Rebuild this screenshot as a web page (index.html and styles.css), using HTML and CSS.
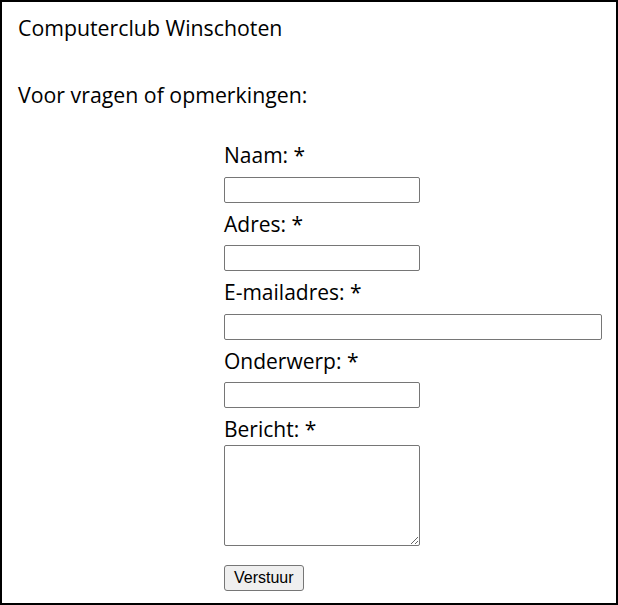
FILE: index.html
```html
<!DOCTYPE html>
<html lang="nl">
<head>
    <meta charset="UTF-8">
    <meta name="viewport" content="width=device-width, initial-scale=1.0">
    <title>Computerclub Winschoten - Contact</title>
    <link rel="stylesheet" href="styles.css">
</head>
<body>
    <div class="page">
        <p class="club">Computerclub Winschoten</p>
        <p class="intro">Voor vragen of opmerkingen:</p>
        <form class="contact">
            <label for="naam">Naam: *</label>
            <input type="text" id="naam" class="field">
            <label for="adres">Adres: *</label>
            <input type="text" id="adres" class="field">
            <label for="email">E-mailadres: *</label>
            <input type="text" id="email" class="field wide">
            <label for="onderwerp">Onderwerp: *</label>
            <input type="text" id="onderwerp" class="field">
            <label for="bericht">Bericht: *</label>
            <textarea id="bericht" class="message"></textarea>
            <button type="button" class="send">Verstuur</button>
        </form>
    </div>
</body>
</html>
```

FILE: styles.css
```css
html, body {
    margin: 0;
    padding: 0;
    background-color: #ffffff;
}
.page {
    box-sizing: border-box;
    width: 618px;
    height: 605px;
    border: 2px solid #000000;
    padding: 12px 0 0 16px;
    font-family: "Open Sans", "Noto Sans", sans-serif;
    color: #000000;
    overflow: hidden;
}
.club, .intro {
    margin: 0;
    font-size: 21.3px;
    line-height: 28px;
}
.intro {
    margin-top: 39px;
}
.contact {
    display: flex;
    flex-direction: column;
    align-items: flex-start;
    margin: 33px 0 0 206px;
}
.contact label {
    font-size: 21px;
    line-height: 27.5px;
}
.field {
    box-sizing: border-box;
    width: 196px;
    height: 26px;
    margin: 7px 0 8px;
    border: 1px solid #767676;
    border-radius: 2px;
    padding: 0 4px;
}
.field.wide {
    width: 378px;
}
.message {
    box-sizing: border-box;
    width: 196px;
    height: 101px;
    margin: 1px 0 0;
    border: 1px solid #767676;
    border-radius: 2px;
}
.send {
    margin-top: 19px;
    height: 26px;
    padding: 1px 9px;
    font-family: "Liberation Sans", Arial, sans-serif;
    font-size: 16px;
    color: #000000;
    background-color: #efefef;
    border: 1px solid #767676;
    border-radius: 3px;
}
```
